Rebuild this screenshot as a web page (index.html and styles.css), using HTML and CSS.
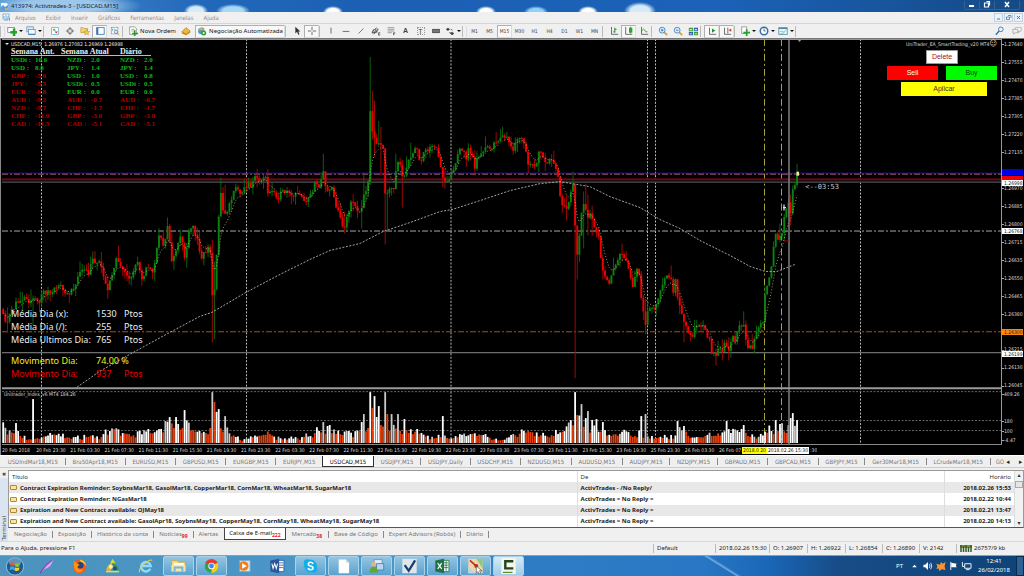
FILE: index.html
```html
<!DOCTYPE html>
<html lang="pt">
<head>
<meta charset="utf-8">
<title>413974: Activtrades-3 - [USDCAD,M15]</title>
<link rel="stylesheet" href="styles.css">
</head>
<body>
<header class="titlebar">
  <svg class="i9" viewBox="0 0 9 9"><path d="M1 1h6l1 2v5H1z" fill="#eef4fa"/><path d="M1 5l2-2 2 2 3-2v5H1z" fill="#5a9bd0"/><path d="M5 6h3v2H5z" fill="#e4a53a"/></svg>
  <h1>413974: Activtrades-3 - [USDCAD,M15]</h1>
  <div class="wincontrols">
    <button aria-label="Minimizar"><svg viewBox="0 0 14 9"><path d="M4 5h5v2H4z" fill="#fff"/></svg></button>
    <button aria-label="Restaurar"><svg viewBox="0 0 14 9"><path d="M6.500 1.500h3v4M4.500 3h4v4h-4z" fill="none" stroke="#fff" stroke-width="1.200"/></svg></button>
    <button class="wide" aria-label="Fechar"><svg viewBox="0 0 14 9"><path d="M5 2l4 5M9 2L5 7" stroke="#fff" stroke-width="1.500"/></svg></button>
  </div>
</header>
<nav class="menubar">
  <svg class="i9" viewBox="0 0 9 9"><rect x="1" y="1" width="6" height="5" fill="#fff" stroke="#6aa5cf" stroke-width=".8"/><path d="M2 5V3M4 5V2M6 5V3M3 8V6M5 8V5M7.500 8V5" stroke="#5b9fd0" stroke-width=".9"/></svg>
  <a href="#">Arquivo</a><a href="#">Exibir</a><a href="#">Inserir</a><a href="#">Gráficos</a><a href="#">Ferramentas</a><a href="#">Janelas</a><a href="#">Ajuda</a>
  <div class="mdi">
    <button aria-label="Minimizar janela"><svg viewBox="0 0 9 9"><path d="M3 6h3" stroke="#5c7797"/></svg></button>
    <button aria-label="Restaurar janela"><svg viewBox="0 0 9 9"><path d="M4 2.500h3v2.500M2.500 4h3v2.500h-3z" fill="none" stroke="#5c7797" stroke-width=".8"/></svg></button>
    <button aria-label="Fechar janela"><svg viewBox="0 0 9 9"><path d="M3 3l3 3M6 3L3 6" stroke="#5c7797"/></svg></button>
  </div>
</nav>
<div class="toolbar" id="toolbar">
  <i class="grip"></i>
  <button class="tb drop" aria-label="Novo gráfico"><svg viewBox="0 0 12 12"><rect x="1" y="2" width="8" height="6" fill="#fff" stroke="#557" stroke-width=".7"/><path d="M7 3v3H4v3h3v3h3V9h2V6h-2V3z" fill="#1fa526"/></svg></button>
  <button class="tb drop" aria-label="Perfis"><svg viewBox="0 0 12 12"><rect x="1" y="1" width="8" height="6" fill="#dceaf6" stroke="#4c82b4" stroke-width=".8"/><rect x="3" y="4" width="8" height="6" fill="#f6fafd" stroke="#4c82b4" stroke-width=".8"/><path d="M3 10h8" stroke="#4c82b4" stroke-width="1.500"/></svg></button>
  <i class="sep"></i>
  <button class="tb" aria-label="Observação do mercado"><svg viewBox="0 0 12 12"><rect x="2" y="2" width="8" height="8" fill="#fff" stroke="#5a9fcb" stroke-width=".8"/><path d="M5 3l2 2.500H3z" fill="#2aa12c"/><path d="M7.500 9L5.500 6.500h4z" fill="#d03022"/></svg></button>
  <button class="tb" aria-label="Janela de dados"><svg viewBox="0 0 12 12"><circle cx="6" cy="6" r="3" fill="none" stroke="#555" stroke-width=".9"/><path d="M6 1v4M6 7v4M1 6h4M7 6h4" stroke="#555" stroke-width=".8"/></svg></button>
  <button class="tb" aria-label="Navegador"><svg viewBox="0 0 12 12"><path d="M1 2h3l1 1h4v5H1z" fill="#f6d36b" stroke="#a57d1f" stroke-width=".6"/><path d="M8 4l1 2.500 2.500.2-2 1.600.7 2.500L8 9.400 5.800 10.800l.7-2.500-2-1.600L7 6.500z" fill="#fbd53a" stroke="#a57d1f" stroke-width=".5"/></svg></button>
  <button class="tb on" aria-label="Terminal"><svg viewBox="0 0 12 12"><rect x="2" y="2" width="9" height="8" fill="#fff" stroke="#3d77b4"/><path d="M2 2h2v8H2z" fill="#3d77b4"/></svg></button>
  <button class="tb" aria-label="Testador"><svg viewBox="0 0 12 12"><rect x="1.500" y="1.500" width="8" height="8" fill="#fff" stroke="#6d8aa8" stroke-width=".7"/><path d="M3 6V3M5 5V3M7 6V4" stroke="#59a" stroke-width=".8"/><circle cx="7" cy="7" r="2" fill="#e6f1fa" stroke="#458" stroke-width=".7"/><path d="M8.500 8.500l2.500 2.500" stroke="#c8922a"/></svg></button>
  <i class="sep"></i>
  <button class="tb label order"><svg viewBox="0 0 12 12"><path d="M2 1h6l2 2v7H2z" fill="#fff" stroke="#666" stroke-width=".7"/><path d="M4 4h4M4 6h3" stroke="#777" stroke-width=".7"/><path d="M7 5v3H5v2h2v2h2v-2h3V8H9V5z" fill="#1fa526"/></svg>Nova Ordem</button>
  <button class="tb" aria-label="MetaEditor"><svg viewBox="0 0 12 12"><path d="M1 7l5-5 5 4-4 4z" fill="#f0b93b" stroke="#9c6c12" stroke-width=".7"/><path d="M1 7l5 2.500L11 6v2l-5 3-5-2z" fill="#c48b1c"/></svg></button>
  <button class="tb label on auto"><svg viewBox="0 0 12 12"><path d="M2 4q4-5 8 0z" fill="#e2b93c"/><circle cx="5" cy="6" r="3.800" fill="#4a9bd2"/><path d="M1 5q4-5 8 0z" fill="#d5b14a"/><circle cx="8" cy="8.500" r="3" fill="#25a230"/><path d="M7 7l3 1.500L7 10z" fill="#fff"/></svg>Negociação Automatizada</button>
  <i class="sep"></i>
  <button class="tb" aria-label="Cursor"><svg viewBox="0 0 12 12"><path d="M4 1v8l2-2 1.500 3.500 1.500-.7L7.500 6.500H10z" fill="#333"/></svg></button>
  <button class="tb on" aria-label="Mira"><svg viewBox="0 0 12 12"><path d="M6 1v4M6 7v4M1 6h4M7 6h4" stroke="#555"/></svg></button>
  <i class="sep"></i>
  <button class="tb" aria-label="Linha vertical"><svg viewBox="0 0 12 12"><path d="M6 2v7" stroke="#555"/></svg></button>
  <button class="tb" aria-label="Linha horizontal"><svg viewBox="0 0 12 12"><path d="M2 6.500h8" stroke="#555"/></svg></button>
  <button class="tb" aria-label="Linha de tendência"><svg viewBox="0 0 12 12"><path d="M3 9l6-6" stroke="#555" stroke-width=".9"/></svg></button>
  <button class="tb" aria-label="Canal"><svg viewBox="0 0 12 12"><path d="M1 7l6-5M3 10l6-6M3 4l-1 5M6 3L4 9M8 3L6 8M1 8l7-1" stroke="#444" stroke-width=".9"/><path d="M11 8H9v3h2M9 9.500h2" stroke="#333" fill="none" stroke-width=".7"/></svg></button>
  <button class="tb" aria-label="Fibonacci"><svg viewBox="0 0 12 12"><path d="M2 2h8M2 4h8M2 6h8M2 8h5" stroke="#777" stroke-width=".8"/><path d="M9 11V8h2M9 9.500h2" stroke="#333" fill="none" stroke-width=".7"/></svg></button>
  <button class="tb letter"><b>A</b></button>
  <button class="tb letter"><span class="boxed">T</span></button>
  <button class="tb" aria-label="Retângulo"><svg viewBox="0 0 12 12"><rect x="2" y="4" width="8" height="4" fill="#777" stroke="#444"/></svg></button>
  <button class="tb drop" aria-label="Setas"><svg viewBox="0 0 12 12"><path d="M1 4l2.500-2L6 4 3.500 6zM6 9l2.500-2L11 9l-2.500 2z" fill="#444"/><path d="M5 8h2M7 4l2 1" stroke="#555"/></svg></button>
  <i class="grip"></i>
  <button class="tb tf">M1</button><button class="tb tf">M5</button><button class="tb tf on">M15</button><button class="tb tf">M30</button><button class="tb tf">H1</button><button class="tb tf">H4</button><button class="tb tf">D1</button><button class="tb tf">W1</button><button class="tb tf">MN</button>
  <i class="sep"></i>
  <button class="tb" aria-label="Barras"><svg viewBox="0 0 12 12"><path d="M3 1v9h8" stroke="#555" fill="none"/><path d="M7 2v6M7 4h2M5 7h2" stroke="#1d9a27" stroke-width="1.200"/></svg></button>
  <button class="tb on" aria-label="Velas"><svg viewBox="0 0 12 12"><path d="M2 1v9h8M8 1v8" stroke="#555" fill="none"/><rect x="6" y="2" width="4" height="6" fill="#1fae2b"/></svg></button>
  <button class="tb" aria-label="Linha"><svg viewBox="0 0 12 12"><path d="M3 1v9h8" stroke="#555" fill="none"/><path d="M3 6q3-4 4-1t3 2" stroke="#1d9a27" fill="none"/></svg></button>
  <i class="sep"></i>
  <button class="tb" aria-label="Ampliar"><svg viewBox="0 0 12 12"><path d="M7 7l4 4" stroke="#d2a02c" stroke-width="2"/><circle cx="5" cy="5" r="3.500" fill="#dcefff" stroke="#3c7fc0"/><path d="M3.500 5h3M5 3.500v3" stroke="#2c66a8"/></svg></button>
  <button class="tb" aria-label="Reduzir"><svg viewBox="0 0 12 12"><path d="M7 7l4 4" stroke="#d2a02c" stroke-width="2"/><circle cx="5" cy="5" r="3.500" fill="#dcefff" stroke="#3c7fc0"/><path d="M3.500 5h3" stroke="#2c66a8"/></svg></button>
  <button class="tb" aria-label="Lado a lado"><svg viewBox="0 0 12 12"><path d="M1 2h5v4H1zM7 7h5v4H7z" fill="#3e9d2f"/><path d="M7 2h5v4H7zM1 7h5v4H1z" fill="#2d5fb5"/><path d="M2 4h3v1H2zM8 4h3v1H8zM2 9h3v1H2zM8 9h3v1H8z" fill="#fff"/></svg></button>
  <i class="sep"></i>
  <button class="tb on" aria-label="Rolagem"><svg viewBox="0 0 12 12"><path d="M3 2v8h8" stroke="#555" fill="none"/><path d="M6 3l4 2.500L6 8z" fill="#1d9a27"/></svg></button>
  <button class="tb on" aria-label="Deslocamento"><svg viewBox="0 0 12 12"><path d="M3 2v8h8M7 2v7" stroke="#555" fill="none"/><path d="M11 3L8 5l3 2z" fill="#c03a22"/></svg></button>
  <i class="sep"></i>
  <button class="tb drop" aria-label="Indicadores"><svg viewBox="0 0 12 12"><path d="M2 1h6v8H2z" fill="#fff" stroke="#666" stroke-width=".7"/><path d="M7 4v3H4v2h3v3h2V9h3V7H9V4z" fill="#1fa526"/></svg></button>
  <button class="tb drop" aria-label="Períodos"><svg viewBox="0 0 12 12"><circle cx="6" cy="6" r="4.500" fill="#fff" stroke="#2e6fb2" stroke-width="1.800"/><path d="M6 3v3h2" stroke="#444" fill="none" stroke-width=".9"/></svg></button>
  <button class="tb drop" aria-label="Modelos"><svg viewBox="0 0 12 12"><rect x="1" y="2" width="10" height="8" fill="#fff" stroke="#5184ac"/><path d="M1 3h10" stroke="#5184ac" stroke-width="1.500"/><path d="M2 7l3-1 2 1 3-2M3 9l5-1" stroke="#4c9" fill="none"/></svg></button>
  <i class="sep"></i>
  <div class="right">
    <button class="tb" aria-label="Pesquisar"><svg viewBox="0 0 12 12"><circle cx="7" cy="4" r="2.800" fill="#eaf3fb" stroke="#3a6ca8"/><path d="M5 6l-4 4.500" stroke="#3a6ca8" stroke-width="1.600"/></svg></button>
    <button class="tb" aria-label="Mensagens"><svg viewBox="0 0 12 12"><path d="M4 2h7v4H9l-1 2V6H4z" fill="#fff" stroke="#999" stroke-width=".8"/><path d="M1 4h6v4H4l-2 2V8H1z" fill="#eee" stroke="#999" stroke-width=".8"/></svg></button>
  </div>
</div>

<main class="chart">
  <div class="chartrow">
    <div class="plot">
      <svg class="canvas" id="canvas" viewBox="2 39 999 406" preserveAspectRatio="none" role="img" aria-label="USDCAD M15"></svg>
      <div class="info">
        <p class="quote"><span class="tri"></span>USDCAD,M15 &nbsp;1.26976 1.27082 1.26969 1.26998</p>
        <table class="strength">
          <colgroup><col class="n"><col class="v"><col class="n"><col class="v2"><col class="n"><col></colgroup>
          <thead><tr><th colspan="2">Semana Ant.</th><th colspan="2" class="mid">Semana Atual</th><th colspan="2">Diário</th></tr></thead>
          <tbody id="strength"></tbody>
        </table>
      </div>
      <div class="trade">
        <p>UniTrader_EA_SmartTrading_v20 MT4<span class="face">☺</span></p>
        <button class="delete">Delete</button>
        <div class="pair"><button class="sell">Sell</button><button class="buy">Buy</button></div>
        <button class="apply">Aplicar</button>
      </div>
      <p class="countdown">&lt;--03:53</p>
      <table class="stats">
        <tr><td>Média Dia (x):</td><td>1530</td><td>Ptos</td></tr>
        <tr><td>Média Dia (/):</td><td>255</td><td>Ptos</td></tr>
        <tr><td>Média Ultimos Dia:</td><td>765</td><td>Ptos</td></tr>
        <tr class="gap"><td></td></tr>
        <tr class="y"><td>Movimento Dia:</td><td colspan="2">74.00 %</td></tr>
        <tr class="r"><td>Movimento Dia:</td><td>937</td><td>Ptos</td></tr>
      </table>
      <p class="indname">Unitrader_Index_v6 MT4 184.26</p>
    </div>
    <div class="scale">
      <div class="prices" id="prices"></div>
      <div class="levels"><span class="l1">409.26</span><span class="l2">180</span><span class="l3">100</span><span class="l4">-4.47</span></div>
      <span class="tag blue">1.27043</span><span class="tag red"></span><span class="tag w1">1.26998</span><span class="tag w2">1.26768</span><span class="tag orange">1.26300</span><span class="tag w3">1.26199</span>
    </div>
  </div>
  <div class="times"><div class="timelabels" id="times"></div><span class="tt ytag">2018.0 20</span><span class="tt wtag">2018.02.26 15:30</span><span class="tt rest">:30</span></div>
</main>

<nav class="tabs">
  <a href="#">USDIndMar18,M15</a><a href="#">Bra50Apr18,M15</a><a href="#">EURUSD,M15</a><a href="#">GBPUSD,M15</a><a href="#">EURGBP,M15</a><a href="#">EURJPY,M15</a><a href="#" class="active">USDCAD,M15</a><a href="#">USDJPY,M15</a><a href="#">USDJPY,Daily</a><a href="#">USDCHF,M15</a><a href="#">NZDUSD,M15</a><a href="#">AUDUSD,M15</a><a href="#">AUDJPY,M15</a><a href="#">NZDJPY,M15</a><a href="#">GBPAUD,M15</a><a href="#">GBPCAD,M15</a><a href="#">GBPJPY,M15</a><a href="#">Ger30Mar18,M15</a><a href="#">LCrudeMar18,M15</a><a href="#" class="last">GO</a>
  <span class="arrows"><span>◂</span><b>▸</b></span>
</nav>

<section class="terminal">
  <aside><button aria-label="Fechar terminal">✖</button><span>Terminal</span></aside>
  <div class="termbody">
    <div class="mail">
      <table>
        <colgroup><col><col class="c2"><col class="c3"></colgroup>
        <thead><tr><th>Título</th><th>De</th><th class="date">Horário</th></tr></thead>
        <tbody>
          <tr><td><i class="env"></i>Contract Expiration Reminder: SoybnsMar18, GasolMar18, CopperMar18, CornMar18, WheatMar18, SugarMar18</td><td>ActivTrades - /No Reply/</td><td class="date">2018.02.26 15:53</td></tr>
          <tr><td><i class="env"></i>Contract Expiration Reminder: NGasMar18</td><td>ActivTrades = No Reply =</td><td class="date">2018.02.22 10:44</td></tr>
          <tr><td><i class="env"></i>Expiration and New Contract available: OJMay18</td><td>ActivTrades = No Reply =</td><td class="date">2018.02.21 13:47</td></tr>
          <tr><td><i class="env"></i>Expiration and New Contract available: GasolApr18, SoybnsMay18, CopperMay18, CornMay18, WheatMay18, SugarMay18</td><td>ActivTrades = No Reply =</td><td class="date">2018.02.20 14:13</td></tr>
        </tbody>
      </table>
      <div class="scroll"><span>▴</span><i></i><span class="dn">▾</span></div>
    </div>
    <nav class="termtabs">
      <a href="#">Negociação</a><a href="#">Exposição</a><a href="#">Histórico da conta</a><a href="#">Notícias<sub>99</sub></a><a href="#" class="nb">Alertas</a><a href="#" class="active">Caixa de E-mail<sub>222</sub></a><a href="#" class="market">Mercado<sub>38</sub></a><a href="#">Base de Código</a><a href="#">Expert Advisors (Robôs)</a><a href="#">Diário</a>
    </nav>
  </div>
</section>

<footer class="status">
  <span class="help">Para o Ajuda, pressione F1</span>
  <span class="s62">Default</span><span class="s54">2018.02.26 15:30</span><span class="s38">O: 1.26907</span><span class="s38">H: 1.26922</span><span class="s36">L: 1.26854</span><span class="s36">C: 1.26890</span><span class="s36">V: 2142</span>
  <span class="s70"><svg viewBox="0 0 12 7"><path d="M0 0h12v3H0z" fill="#8a8f2a"/><path d="M1 7V0M3.500 7V1M6 7V0M8.500 7V2M11 7V0" stroke="#2c5f2d" stroke-width="1.500"/></svg>26757/9 kb</span>
</footer>

<div class="taskbar">
  <button class="start" aria-label="Iniciar"><svg viewBox="0 0 22 20"><circle cx="11" cy="10" r="9.500" fill="#1c5b91" stroke="#9cc4df"/><ellipse cx="11" cy="5" rx="7" ry="4" fill="#8db9d8" opacity=".6"/><path d="M6 6q2.500-1.500 4.500 0v3.500Q8 8 5.500 9.500z" fill="#f0592b"/><path d="M11.500 6.500q2.500 1 5 0L15.500 10q-2 1-4.500 0z" fill="#8cc63f"/><path d="M5.500 10.500Q8 9 10.500 10.500V14Q8 12.500 5 14z" fill="#38a9e4"/><path d="M11 11q2.500 1 5 0L15 14.500q-2 1-4.500 0z" fill="#fbd11e"/></svg></button>
  <button aria-label="Pena"><svg viewBox="0 0 20 20"><path d="M3 18Q8 8 18 2 17 12 7 14z" fill="#d9a2f0"/><path d="M2 19Q8 9 17 3" stroke="#7f35b5" fill="none" stroke-width="1.300"/></svg></button>
  <button aria-label="Firefox"><svg viewBox="0 0 20 20"><circle cx="10" cy="10.500" r="8.500" fill="#ef5a1c"/><path d="M10 2q8 1 8.500 9-2-5-6-5z" fill="#ffcb1f"/><circle cx="11" cy="9" r="4" fill="#29417f"/><path d="M3 4q3 1 4 3 2 0 3 2-4 1-2 4 4 3 7 0-1 5-7 5Q2 16 3 4z" fill="#ff9312"/></svg></button>
  <button aria-label="MetaTrader"><svg viewBox="0 0 20 20"><path d="M10 1l4 6H7z" fill="#d3dd40"/><path d="M2 16Q3 8 10 6l-2 10z" fill="#e8b52d"/><path d="M10 6q7 2 8 10h-8z" fill="#3e8f59"/><circle cx="8" cy="11" r="2.500" fill="#fff1b5"/><circle cx="13" cy="13" r="2.500" fill="#244e83"/><path d="M2 16h16v2H2z" fill="#cde079"/></svg></button>
  <button aria-label="Internet Explorer"><svg viewBox="0 0 20 20"><path d="M16 13.500A6 6 0 1 1 16.500 10H6" fill="none" stroke="#8cdcff" stroke-width="3"/><path d="M3 18Q0 15 8 8 16 1 18.500 3" fill="none" stroke="#f3cb3f" stroke-width="1.300"/></svg></button>
  <button class="open" aria-label="Explorador"><svg viewBox="0 0 22 20"><path d="M2 3h7l2 2h9v12H2z" fill="#f4dc83" stroke="#c9a343"/><path d="M5 6h13v5H5z" fill="#fffbe0"/><path d="M2 9h18v8H2z" fill="#f8e7a0"/><path d="M6 17v-5h10v5" fill="none" stroke="#72b6e0" stroke-width="2.500"/></svg></button>
  <button class="open" aria-label="Chrome"><svg viewBox="0 0 20 20"><circle cx="10" cy="10" r="8.500" fill="#2fa24b"/><path d="M10 10L2.600 5.800A8.500 8.500 0 0 1 17.400 5.800z" fill="#e33b2e"/><path d="M10 10l7.400-4.200A8.500 8.500 0 0 1 10 18.500z" fill="#fbcb12"/><circle cx="10" cy="10" r="4" fill="#fff"/><circle cx="10" cy="10" r="3" fill="#4286f0"/></svg></button>
  <button aria-label="Media Player"><svg viewBox="0 0 20 20"><rect x="4" y="3" width="13" height="14" fill="#d9e7f2" stroke="#7ba8cd"/><circle cx="9" cy="10" r="6" fill="#ef7e1b"/><path d="M7 6.500l6 3.500-6 3.500z" fill="#fff"/></svg></button>
  <button aria-label="Word"><svg viewBox="0 0 20 20"><path d="M9 3h9v14H9z" fill="#fff" stroke="#2b579a"/><path d="M11 6h6M11 9h6M11 12h6" stroke="#2b579a"/><path d="M1 3l11-2v18L1 17z" fill="#2b579a"/><path d="M3 7l1.500 6L6.500 7l2 6L10 7" fill="none" stroke="#fff" stroke-width="1.300"/></svg></button>
  <button class="open" aria-label="Skype"><svg viewBox="0 0 20 20"><circle cx="10" cy="10" r="8" fill="#14aeea"/><circle cx="6" cy="6" r="4.500" fill="#14aeea"/><circle cx="14" cy="14" r="4.500" fill="#14aeea"/><path d="M13.500 7Q10 4 7.500 6.500q-1 3 2.500 3.500 4 1 3 3.500-3 2.500-6.500-.5" fill="none" stroke="#fff" stroke-width="2"/></svg></button>
  <button class="open" aria-label="Documento"><svg viewBox="0 0 20 20"><path d="M4 2h9l4 4v13H4z" fill="#fff"/><path d="M13 2v4h4" fill="#cfdbe6"/></svg></button>
  <button class="open" aria-label="Contatos"><svg viewBox="0 0 20 20"><path d="M7 2h10v8H7z" fill="#dcedf9" stroke="#5b92bd"/><path d="M10 7h9v8h-9z" fill="#b6d8f0" stroke="#4579a5"/><circle cx="6.500" cy="8" r="3" fill="#e8b67a"/><path d="M1 18q1-7 5.500-7t5.500 7z" fill="#63a62e"/></svg></button>
  <button class="open" aria-label="Tarefas"><svg viewBox="0 0 20 20"><rect x="1" y="1" width="18" height="18" fill="#dfe5e9"/><path d="M4 9l5 7 8-13" fill="none" stroke="#123d75" stroke-width="2.800"/></svg></button>
  <button class="open" aria-label="Excel"><svg viewBox="0 0 20 20"><path d="M9 3h9v14H9z" fill="#fff" stroke="#1f7246"/><path d="M12 6h5M12 9h5M12 12h5M14.500 4v12" stroke="#1f7246"/><path d="M1 3l11-2v18L1 17z" fill="#1f7246"/><path d="M4 6.500l5 7M9 6.500l-5 7" stroke="#fff" stroke-width="1.500"/></svg></button>
  <button class="open" aria-label="Mapa"><svg viewBox="0 0 20 20"><rect x="1" y="1" width="18" height="18" fill="#ead8ac"/><path d="M11 1h8v12z" fill="#8cc987"/><path d="M1 11l9 8H1z" fill="#b7d7e8"/><path d="M3 3l9 8" stroke="#c4281e" stroke-width="2"/><circle cx="11" cy="10" r="2.500" fill="#dc2016"/><path d="M11 10v9l2-2 2 3 1.500-1-1.500-3h3z" fill="#fff" stroke="#333" stroke-width=".7"/></svg></button>
  <button class="open bright" aria-label="Camtasia"><svg viewBox="0 0 20 20"><path d="M1 0h18v20H1z" fill="#f3f6ee"/><path d="M16 4H6v9h10" fill="none" stroke="#25441b" stroke-width="3"/><path d="M3 18h12" stroke="#5d8c31" stroke-width="1.500"/></svg></button>
  <div class="tray">
    <span class="lang">PT</span>
    <svg viewBox="0 0 11 11"><path d="M3 7l2.500-3L8 7z" fill="#fff"/></svg>
    <svg viewBox="0 0 11 11"><path d="M1 4h2l3-3v9L3 7H1z" fill="#fff"/><path d="M7.500 3.500q1.500 2 0 4M9 2q2.500 3.500 0 7" stroke="#fff" fill="none" stroke-width=".9"/></svg>
    <svg viewBox="0 0 11 11"><path d="M1 3l4 1 1-3 2 2 3-2-1 5 1 4-4-1-3 2-.5-3L1 9l1-3z" fill="#f7942b"/></svg>
    <svg viewBox="0 0 11 11"><path d="M2.500 1v9" stroke="#fff"/><path d="M3 2l6 1-1 2 1 2H3z" fill="#fff"/></svg>
    <svg viewBox="0 0 11 11"><path d="M3.500 3h7v5h-7zM5 9.500h4M1 1v5h2" fill="none" stroke="#fff"/></svg>
    <div class="clock"><span>12:41</span><span>26/02/2018</span></div>
    <button class="show" aria-label="Mostrar área de trabalho"></button>
  </div>
</div>
<script src="chart.js"></script>
</body>
</html>
```
FILE: styles.css
```css
* { box-sizing: border-box; }
body { margin: 0; height: 100vh; display: flex; flex-direction: column; overflow: hidden; background: #f0f0f0; color: #222; font: 6px/8px "Noto Sans", "DejaVu Sans", sans-serif; }
button { font: inherit; color: inherit; border: 0; padding: 0; margin: 0; background: none; display: flex; align-items: center; justify-content: center; }
a { color: inherit; text-decoration: none; }
p, h1 { margin: 0; font-weight: normal; }
table { border-collapse: collapse; border-spacing: 0; }
td, th { padding: 0; text-align: left; font-weight: inherit; }
svg { display: block; flex: none; }
.i9 { width: 9px; height: 9px; }

.titlebar { height: 12px; flex: none; display: flex; align-items: center; gap: 2px; background:
  radial-gradient(ellipse 80px 14px at 62px 6px, #9cc6ea 50%, transparent),
  radial-gradient(ellipse 12px 7px at 196px 11px, #d6ecfb 60%, transparent),
  radial-gradient(ellipse 17px 7px at 233px 11px, #a9d8f4 60%, transparent),
  radial-gradient(ellipse 10px 6px at 333px 12px, #fff 60%, transparent),
  radial-gradient(ellipse 10px 6px at 486px 12px, #fff 60%, transparent),
  radial-gradient(ellipse 12px 6px at 536px 12px, #93d0f5 60%, transparent),
  radial-gradient(ellipse 10px 6px at 588px 12px, #fff 60%, transparent),
  radial-gradient(ellipse 16px 9px at 640px 11px, #d5eaf8 60%, transparent),
  linear-gradient(90deg, #4a8fd0, #2268ba 20%, #1b60b4 35%, #1b62b8 70%, #154a86); }
.titlebar h1 { font-size: 6px; color: #10233a; white-space: nowrap; }
.wincontrols { margin: 0 4px 2px auto; display: flex; height: 9px; border: 1px solid #3a618d; border-top: 0; border-radius: 0 0 2px 2px; }
.wincontrols button { width: 15px; border-right: 1px solid #3a618d; }
.wincontrols .wide { width: 24px; border: 0; }
.wincontrols svg { width: 14px; height: 9px; }

.menubar { height: 11px; flex: none; display: flex; align-items: center; padding: 0 1px 0 2px; gap: 10px; color: #8c8c8c; font-family: "DejaVu Sans Condensed", sans-serif; background: #f1f0f1; }
.menubar .i9 { margin-right: -6px; }
.mdi { margin-left: auto; display: flex; gap: 1px; }
.mdi button { width: 9px; height: 9px; border: 1px solid #c0d2e4; background: #eaf2fa; }
.mdi svg { width: 9px; height: 9px; }

.toolbar { height: 15px; flex: none; display: flex; align-items: center; background: #f0f0f0; border-top: 1px solid #d5d5d5; padding: 0; }
.tb { width: 15px; height: 13px; flex: none; }
.tb svg { width: 10px; height: 10px; }
.tb.on { border: 1px solid #b0b0b0; border-right-color: #ddd; border-bottom-color: #ddd; background: #f8f8f8; }
.drop { width: 19px; gap: 2px; }
.drop::after { content: ""; border: 2px solid transparent; border-top-color: #111; border-bottom: 0; width: 0; }
.label { gap: 2px; color: #111; font-size: 6px; white-space: nowrap; }
.order { width: 52px; }
.auto { width: 90px; margin-left: 2px; }
.tf { font-size: 5px; font-family: "DejaVu Sans Condensed", sans-serif; color: #444; }
.letter { font-size: 7px; font-family: "Liberation Sans", sans-serif; color: #444; }
.boxed { border: 1px dotted #999; width: 8px; height: 8px; line-height: 7px; }
.sep { width: 4px; height: 11px; border-left: 1px solid #b9b9b9; margin-left: 0; flex: none; }
.grip { width: 5px; height: 11px; flex: none; border-left: 1px solid #bbb; border-right: 1px solid #ddd; }
.right { margin-left: auto; display: flex; gap: 2px; }

.chart { flex: 1; min-height: 0; background: #000; color: #ddd; display: flex; flex-direction: column; border-top: 1px solid #777; padding-left: 2px; box-shadow: inset 1px 0 #888; font: 5px/6px "DejaVu Sans Condensed", sans-serif; }
.chartrow { flex: 1; min-height: 0; display: flex; }
.plot { flex: 1; min-width: 0; position: relative; }
.canvas { position: absolute; inset: 0; width: 100%; height: 100%; }
.info { position: absolute; left: 3px; top: 2px; }
.quote { display: flex; align-items: center; gap: 2px; font-size: 5px; color: #eee; }
.tri { border: 2px solid transparent; border-top-color: #ddd; border-bottom: 0; }
.strength { margin: 2px 0 0 6px; width: 140px; font: bold 8px/8px "Liberation Serif", serif; table-layout: fixed; color: #11b41b; }
.n { width: 24px; } .v { width: 32px; } .v2 { width: 29px; }
.strength th { border-bottom: 1px solid #bbb; color: #eee; height: 6px; line-height: 6px; white-space: nowrap; }
.strength .mid { text-indent: -6px; }
.strength td { height: 8px; font-size: 7px; white-space: nowrap; }
.strength .neg { color: #ae0000; }
.trade { position: absolute; right: 4px; top: 2px; width: 110px; display: flex; flex-direction: column; align-items: center; gap: 2px; }
.trade p { align-self: flex-end; white-space: nowrap; display: flex; align-items: center; }
.face { font-size: 8px; }
.trade button { height: 14px; font: 7px/8px "Liberation Sans", sans-serif; }
.trade p + button { margin-top: 1px; }
.delete { width: 32px; background: #fff; border: 1px solid #999; color: #a81325; }
.pair { display: flex; gap: 8px; align-self: stretch; }
.pair button { flex: 1; }
.sell { background: #fe0000; color: #fff; }
.buy { background: #00fb00; color: #064506; }
.apply { width: 86px; background: #ffff00; color: #333; margin-left: 4px; }
.countdown { position: absolute; left: 80.400%; top: 35.500%; font: 7px/8px "DejaVu Sans Mono", monospace; color: #ccc; }
.stats { position: absolute; left: 9px; bottom: 64px; font: 9px/13px "Noto Sans", sans-serif; color: #eee; white-space: nowrap; }
.stats td { height: 13px; padding: 0; }
.stats td:first-child { width: 85px; }
.stats td:nth-child(2) { width: 28px; }
.stats .gap td { height: 8px; }
.stats .y { color: #f2ee18; }
.stats .r { color: #e80000; }
.indname { position: absolute; left: 2px; top: 87%; }
.scale { width: 23px; flex: none; position: relative; border-left: 1px solid #999; display: flex; flex-direction: column; color: #ddd; }
.prices { height: 86.300%; display: flex; flex-direction: column; justify-content: space-between; padding-top: 2px; }
.prices span { height: 6px; }
.prices span::before, .levels span::before { content: ""; display: inline-block; width: 2px; height: 1px; background: #aaa; vertical-align: middle; }
.levels { flex: 1; position: relative; }
.levels span { position: absolute; left: 0; }
.l1 { top: 2px; } .l2 { top: 53%; } .l3 { top: 71%; } .l4 { top: 88%; }
.tag { position: absolute; left: 0; right: 1px; height: 6px; padding-left: 2px; color: #222; background: #fff; }
.tag.blue { top: 32.200%; background: #0000f2; color: #0000b0; }
.tag.red { top: 33.800%; background: #f00000; }
.w1 { top: 34.700%; } .w2 { top: 46.700%; } .w3 { top: 77%; }
.tag.orange { top: 71.500%; background: #ff8410; }
.times { height: 11px; flex: none; border-top: 1px solid #888; position: relative; overflow: hidden; margin-right: 22px; }
.timelabels { display: flex; padding-top: 2px; }
.timelabels span { flex: 0 0 3.415%; white-space: nowrap; }
.tt { position: absolute; top: 2px; height: 7px; white-space: nowrap; color: #111; text-align: center; overflow: hidden; }
.ytag { left: 74%; width: 25px; background: #ff0; }
.wtag { left: 76.500%; width: 42px; background: #fff; }
.rest { left: 80.800%; color: #ddd; }

.tabs { height: 13px; flex: none; display: flex; align-items: center; background: #f0eff0; border-bottom: 1px solid #ccc; border-top: 1px solid #fff; color: #777; font-family: "DejaVu Sans Condensed", sans-serif; white-space: nowrap; overflow: hidden; padding: 0 2px 0 1px; }
.tabs a { padding: 0 5px; border-right: 1px solid #888; height: 7px; line-height: 7px; flex: auto; text-align: center; }
.tabs .active { background: #fff; color: #111; height: 11px; line-height: 11px; border: 1px solid #333; border-top: 0; margin-left: -1px; }
.tabs .last { border: 0; flex: none; padding-right: 2px; }
.arrows { flex: none; width: 16px; display: flex; justify-content: space-between; color: #222; font-size: 7px; }

.terminal { flex: none; display: flex; padding-top: 2px; height: 73px; }
.terminal aside { width: 8px; flex: none; background: #dbe5f2; display: flex; flex-direction: column; align-items: center; justify-content: space-between; color: #444; }
.terminal aside button { width: 8px; height: 8px; font-size: 5px; background: #f0f0f0; }
.terminal aside span { writing-mode: vertical-rl; transform: rotate(180deg); line-height: 8px; }
.termbody { flex: 1; min-width: 0; display: flex; flex-direction: column; }
.mail { display: flex; height: 58px; border: 1px solid #999; border-bottom-color: #555; background: #fff; }
.mail table { flex: 1; width: 100%; table-layout: fixed; line-height: 8px; }
.mail td, .mail th { height: 11px; padding: 0 4px 0 3px; border-right: 1px solid #ddd; white-space: nowrap; overflow: hidden; }
.mail th { color: #333; }
.mail td { font-weight: bold; color: #222; }
.mail tbody tr:nth-child(odd) { background: #e8e8e8; }
.c2 { width: 367px; } .c3 { width: 70px; }
.mail .date { text-align: right; border: 0; padding-right: 3px; }
.mail td:first-child { padding-left: 1px; }
.env { display: inline-block; width: 7px; height: 5px; margin-right: 3px; vertical-align: middle; border: 1px solid #b08a2c; border-radius: 1px; background: #f9e3a0; }
.scroll { width: 9px; flex: none; background: #f1f1f1; display: flex; flex-direction: column; align-items: center; color: #333; border-left: 1px solid #ddd; }
.scroll i { width: 8px; height: 7px; border: 1px solid #aaa; background: #e6e6e6; margin-top: 2px; }
.scroll .dn { margin-top: auto; }
.termtabs { display: flex; align-items: center; color: #777; padding-left: 1px; height: 12px; }
.termtabs a { padding: 0 5px; border-right: 1px solid #888; height: 7px; line-height: 7px; white-space: nowrap; }
.termtabs .nb { border: 0; padding-right: 6px; }
.termtabs .active { height: 12px; line-height: 11px; background: #fff; color: #111; border: 1px solid #444; border-top: 0; padding: 0 4px; }
.termtabs .market { padding: 0 6px; }
.termtabs sub { font-size: 5px; line-height: 0; color: #d22; vertical-align: sub; font-weight: bold; }

.status { height: 14px; flex: none; display: flex; align-items: center; border-top: 1px solid #d8d8d8; white-space: nowrap; }
.status span { border-left: 1px solid #bbb; padding-left: 3px; line-height: 9px; display: flex; align-items: center; gap: 2px; }
.status .help { flex: 1; padding-left: 1px; border: 0; }
.status svg { width: 12px; height: 7px; }
.s62 { width: 62px; } .s54 { width: 54px; } .s38 { width: 38px; } .s36 { width: 37px; } .s70 { width: 68px; }

.taskbar { height: 21px; flex: none; display: flex; align-items: center; gap: 2px; border-top: 1px solid #6fa7d2; background:
  linear-gradient(32deg, transparent 48%, #a9d6f599 50%, transparent 55%) 692px 0 / 60px 21px no-repeat,
  linear-gradient(90deg, #4c93bd, #4a97ca 40%, #2e7dc4 51%, #2a78c5 68%, #1a66b8 75%, #174c86 82%, #0e4378); }
.taskbar > button { width: 31px; height: 20px; }
.taskbar > button.start { width: 29px; }
.taskbar > button svg { width: 17px; height: 16px; }
.taskbar > button.start svg { width: 20px; height: 19px; }
.taskbar > .open { border: 1px solid #a8d2e9; border-radius: 2px; background: linear-gradient(#94c4e0, #5aa2cf); }
.taskbar > .bright { background: linear-gradient(#d8ebf5, #9fcce7); }
.tray { margin-left: auto; display: flex; align-items: center; gap: 2px; color: #fff; height: 100%; }
.tray svg { width: 11px; height: 10px; }
.lang { padding-right: 4px; }
.clock { display: flex; flex-direction: column; align-items: center; width: 40px; line-height: 9px; }
.show { width: 8px; height: 100%; border: 1px solid #0b2a4c; background: #2c6096; }
```
FILE: chart.js
```js
const NS = "http://www.w3.org/2000/svg";
const canvas = document.getElementById("canvas");
let seed = 11;
const rnd = () => (seed = (seed * 16807) % 2147483647) / 2147483647;

function add(name, attrs) {
  const el = document.createElementNS(NS, name);
  for (const k in attrs) el.setAttribute(k, attrs[k]);
  canvas.appendChild(el);
}
function line(x1, y1, x2, y2, stroke, width, dash) {
  add("line", { x1, y1, x2, y2, stroke, "stroke-width": width, "stroke-dasharray": dash || "none" });
}
function at(keys, x) {
  for (let i = 1; i < keys.length; i++) {
    if (x <= keys[i][0]) {
      const [a, b] = [keys[i - 1], keys[i]];
      return a[1] + (b[1] - a[1]) * Math.max(0, (x - a[0]) / (b[0] - a[0]));
    }
  }
  return keys[keys.length - 1][1];
}
const parse = s => s.trim().split(/\s+/).map(p => p.split(",").map(Number));

const closes = parse(`3,317 7,327 10,310 15,307 20,300 27,297 30,303 33,299 38,305 42,293 47,292 53,295 58,283
67,297 72,287 77,285 80,270 89,275 92,260 100,263 104,276 108,293 112,275 115,263 117,252 119,267 129,282 138,260
142,278 147,268 153,272 157,250 160,233 163,245 168,228 172,262 177,252 181,233 185,260 189,233 193,227 197,240
202,257 209,247 211,258 213,315 216,265 218.500,217 221,193 223,213 228,210 231,200 235,185 238,192 247,187 252,184 255,175 258,183
265,175 268,195 273,190 278,197 285,192 292,198 300,193 307,203 313,190 315,178 319,187 323,173 326,190 332,187
337,210 344,228 348,213 353,200 357,210 361,215 364,193 368,183 370.500,106 372,127 375,143 378,147 382,140
384,153 385.500,208 388,190 393,192 397,163 401,165 403,183 407,168 411,157 417,147 420,167 423,150 430,148 437,150
440,167 445,182 452,173 457,160 458,152 463,152 467,158 469,147 475,167 478,155 483,155 487,145 492,148 498,142
502,132 507,140 513,153 518,137 523,140 529,167 534,168 540,152 545,165 550,162 557,168 560,195 566,213 571,190
574,184 576,262 578,248 582,207 585,207 588,217 593,217 595,238 598,232 600,258 603,270 609,282 613,270 620,253
623,260 627,260 632,288 638,267 641,297 646,328 648,307 655,307 660,293 665,280 671,277 673,293 676,280 678,300
681,307 685,327 692,335 697,327 705,328 710,342 712,357 718,352 722,352 724,340 729,353 732,333 735,342 740,325
743,323 747,345 752,350 757,330 763,322 765,297 768,287 772,263 775,235 779,240 783,230 785,210 788,200 791,213
793,185 795,188 797,173`);

/* Bars whose wick runs far past the body: x, high, low */
const wicks = parse(`7,308,333 33,296,326 92,252,270 118,246,262 168,218,240 212,240,343 214,262,340 221,178,214 225,185,213
323,154,180 326,172,193 344,212,234 361,200,229 364,173,205 370.500,57,185 373,91,140 375,101,157 378,121,147 381,127,176 385,153,245 387.500,190,232
395,154,185 403,160,208 411,143,166 445,168,189 458,150,163 475,150,174 502,127,137 529,152,174 566,196,221 574,172,190 576,183,379
578,240,280 583,192,249 585,184,212 588,195,236 592,206,236 603,255,280 613,258,274 621,244,262 646,300,335 671,266,280
685,320,343 716,349,366 729,338,361 743,312,325 752,335,350 779,224,243 791,195,226 797,164,188`);

const averages = parse(`77,388 100,372 130,355 170,333 200,317 212,313 246,293 280,275 310,260 330,251 360,244 383,232
410,223 440,212 452,210 480,201 510,191 540,184 560,182 590,187 610,197 640,208 660,220 680,229 700,241 730,256
750,267 765,272 777,272 795,265`);

/* Gridlines and levels */
for (const x of [41.5, 246.5, 451, 647.5, 655.5, 860.5]) line(x, 39, x, 445, "#b8b8b8", 1, "2 1.500");
for (const y of [392.5, 421.5, 431.5]) line(2, y, 1001, y, "#666", 1, "2 1.500");
for (const x of [764.5, 781.5]) line(x, 39, x, 445, "#a5a532", 1, "7 3 2 3");
line(2, 173.5, 1001, 173.5, "#1a1aa8", 1);
line(2, 174.5, 1001, 174.5, "#a8587c", 1, "6 2 2 2");
add("rect", { x: 2, y: 179, width: 999, height: 4, fill: "#230a0e" });
line(2, 179.5, 1001, 179.5, "#a80808", 1);
line(2, 182.5, 1001, 182.5, "#4c5c66", 1);
line(2, 231.5, 1001, 231.5, "#a8a8a8", 1, "6 2 2 2");
line(2, 332.5, 1001, 332.5, "#a8511c", 1, "6 2 2 2");
line(2, 353.5, 1001, 353.5, "#8c8c8c", 1);

/* Candles */
const step = 2.134, count = 373;
const series = [];
let prev = 310;
for (let i = 0; i < count; i++) {
  const x = 3.2 + i * step;
  const close = at(closes, x) + (rnd() - 0.5) * 7;
  const open = prev;
  let high = Math.min(open, close) - rnd() * rnd() * 12;
  let low = Math.max(open, close) + rnd() * rnd() * 12;
  for (const w of wicks) if (Math.abs(w[0] - x) <= step / 2) { high = w[1]; low = w[2]; }
  const up = close <= open;
  add("line", { x1: x, x2: x, y1: high, y2: low, stroke: up ? "#0b6a10" : "#b00808", "stroke-width": 0.9 });
  add("rect", { x: x - 0.95, width: 1.9, y: Math.min(open, close), height: Math.max(1, Math.abs(close - open)), fill: up ? "#0a8210" : "#f20000" });
  series.push([x, close]);
  prev = close;
}

/* Moving averages */
let e = series[0][1];
const fast = series.map(([x, c]) => { e += (c - e) * 0.28; return x + "," + e; });
add("polyline", { points: fast.join(" "), fill: "none", stroke: "#c5b878", "stroke-width": 0.8, "stroke-dasharray": "1 2" });
add("polyline", { points: averages.join(" "), fill: "none", stroke: "#b4b4b4", "stroke-width": 0.9, "stroke-dasharray": "2 1.500" });

/* Volume */
const base = parse(`3,15 20,10 26,4 36,5 52,9 70,7 80,5 90,8 100,6 115,16 120,12 135,9 160,11 172,22 180,22 190,14 207,10
215,30 225,14 235,8 243,3 250,5 262,9 268,14 275,5 300,5 310,8 320,13 330,14 340,9 355,9 368,18 375,25 380,21 390,18
400,15 410,13 420,10 430,5 440,8 450,5 460,7 475,10 485,8 495,4 505,4 515,9 525,13 535,11 545,9 560,10 570,16 577,28
585,18 595,16 605,10 620,10 640,9 655,5 675,7 684,16 692,4 705,8 720,10 735,13 743,13 750,7 760,6 768,15 780,14 797,15`);
const spikes = parse(`16,20 33,44 165,22 169,26 177,26 184,33 212,51 214,41 219,34 225,27 323,21 329,18 362,21 364,29 370,51 372,35
374,47 378,37 385,51 387,29 391,29 397,29 404,24 442,27 575,51 577,28 581,39 587,32 585,25 596,24 602,21 641,27 645,29
677,22 684,17 726,22 743,18 775,23 790,25 792,30 796,23`);
for (let i = 0; i < count; i++) {
  const x = 3.2 + i * step;
  const s = spikes.find(k => Math.abs(k[0] - x) <= step / 2);
  const white = rnd() < 0.5;
  const h = s ? s[1] : at(base, x) * (white ? 0.8 + rnd() * 0.6 : 0.6 + rnd() * 0.4);
  const orange = s ? [214, 372, 387, 577].includes(s[0]) : !white;
  add("rect", { x: x - 0.9, width: 1.8, y: 444 - h, height: h, fill: orange ? "#e5400f" : rnd() < 0.2 ? "#c9c9c9" : "#fff" });
}

/* Crosshair, pane divider and markers */
line(789, 39, 789, 445, "#777", 1.6);
line(2, 39.5, 1001, 39.5, "#999", 1);
line(2, 389, 1001, 389, "#999", 2);
add("path", { d: "M797 39h5l-2.500 3z", fill: "#999" });
add("path", { d: "M784 205v6M783 208h3", stroke: "#dfe4ff", "stroke-width": 1.2 });
add("rect", { x: 796.5, y: 172, width: 2.5, height: 4, fill: "#f6e6a5" });
line(784, 241.5, 789, 241.5, "#a00", 1);

/* Slots behind the blue and orange price tags stay empty */
const prices = "27640 27555 27470 27385 27305 27220 27135 - 26970 26885 26800 26715 26635 26550 26465 26380 - 26215 26130 26045";
document.getElementById("prices").innerHTML = prices.split(" ").map(p => p === "-" ? "<span></span>" : `<span>1.${p}</span>`).join("");

const times = "20 Feb 2018|20 Feb 23:30|21 Feb 03:30|21 Feb 07:30|21 Feb 11:30|21 Feb 15:30|21 Feb 19:30|21 Feb 23:30|22 Feb 03:30|22 Feb 07:30|22 Feb 11:30|22 Feb 15:30|22 Feb 19:30|22 Feb 23:30|23 Feb 03:30|23 Feb 07:30|23 Feb 11:30|23 Feb 15:30|23 Feb 19:30|25 Feb 23:30|26 Feb 03:30|26 Feb 07:";
document.getElementById("times").innerHTML = times.split("|").map(t => `<span>${t}</span>`).join("");

const strength = [
  ["USDi", "10.6", "NZD", "2.0", "NZD", "2.0"], ["USD", "8.8", "JPY", "1.4", "JPY", "1.4"],
  ["GBP", "-5.0", "USD", "1.0", "USD", "0.8"], ["JPY", "-5.5", "USDi", "0.5", "USDi", "0.5"],
  ["EUR", "-8.8", "EUR", "0.0", "EUR", "0.0"], ["AUD", "-9.2", "AUD", "-0.7", "AUD", "-0.7"],
  ["NZD", "-9.7", "CHF", "-1.7", "CHF", "-1.7"], ["CHF", "-11.0", "GBP", "-3.0", "GBP", "-3.0"],
  ["CAD", "-11.5", "CAD", "-5.1", "CAD", "-5.1"]];
document.getElementById("strength").innerHTML = strength.map(r => "<tr>" + r.map((c, i) => {
  const value = i % 2 ? c : r[i + 1];
  return `<td class="${value.startsWith("-") ? "neg" : "pos"}">${i % 2 ? c : c + " :"}</td>`;
}).join("") + "</tr>").join("");
```
